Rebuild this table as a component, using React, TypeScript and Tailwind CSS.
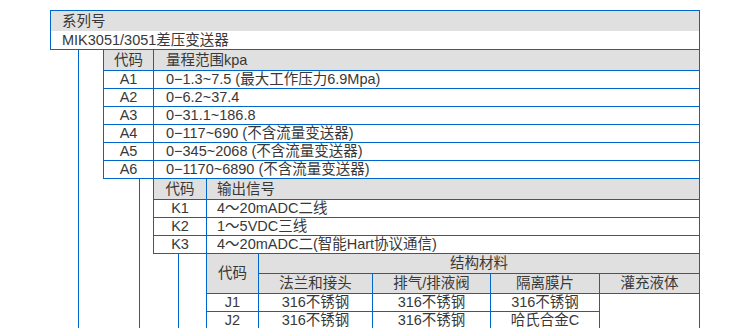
const BLUE = 'border-[#0066cc]'

function Row({ code, text }: { code: string; text: string }) {
  return (
    <div className={`flex h-[18px] border-b ${BLUE}`}>
      <div className={`w-[50px] text-center leading-[17px] border-r ${BLUE}`}>{code}</div>
      <div className="flex-1 pl-[12px] leading-[17px]">{text}</div>
    </div>
  )
}

export default function App() {
  const ranges = [
    ['A1', '0−1.3~7.5 (最大工作压力6.9Mpa)'],
    ['A2', '0−6.2~37.4'],
    ['A3', '0−31.1~186.8'],
    ['A4', '0−117~690 (不含流量变送器)'],
    ['A5', '0−345~2068 (不含流量变送器)'],
    ['A6', '0−1170~6890 (不含流量变送器)'],
  ]
  const outputs = [
    ['K1', '4～20mADC二线'],
    ['K2', '1～5VDC三线'],
    ['K3', '4～20mADC二(智能Hart协议通信)'],
  ]
  const cell = 'bg-white text-center leading-[17px]'
  const head = 'bg-[#e0e0e0] text-center leading-[19px]'

  return (
    <div
      className="w-[750px] h-[328px] overflow-hidden bg-white text-[14.5px] text-[#383838]"
      style={{ fontFamily: '"Liberation Sans", "Noto Sans CJK SC", sans-serif' }}
    >
      <div className="ml-[50px] mt-[10px] w-[650px]">
        {/* 系列号 */}
        <div className={`border ${BLUE}`}>
          <div className="h-[20px] bg-[#e0e0e0] pl-[11px] leading-[20px]">系列号</div>
          <div className="h-[18px] pl-[11px] leading-[18px]">MIK3051/3051差压变送器</div>
        </div>

        <div className="flex">
          <div className="w-[28px] shrink-0" />
          <div className={`w-[25px] shrink-0 border-l ${BLUE}`} />
          <div className="flex-1">
            {/* 量程 */}
            <div className={`border-x ${BLUE}`}>
              <div className={`flex h-[21px] bg-[#e0e0e0] border-b ${BLUE}`}>
                <div className={`w-[50px] text-center leading-[20px] border-r ${BLUE}`}>代码</div>
                <div className="flex-1 pl-[12px] leading-[20px]">量程范围kpa</div>
              </div>
              {ranges.map(([c, t]) => <Row key={c} code={c} text={t} />)}
            </div>

            <div className="flex">
              <div className="w-[36px] shrink-0" />
              <div className={`w-[14px] shrink-0 border-l ${BLUE}`} />
              <div className="flex-1">
                {/* 输出信号 */}
                <div className={`border-x ${BLUE}`}>
                  <div className={`flex h-[21px] bg-[#e0e0e0] border-b ${BLUE}`}>
                    <div className={`w-[53px] text-center leading-[20px] border-r ${BLUE}`}>代码</div>
                    <div className="flex-1 pl-[10px] leading-[20px]">输出信号</div>
                  </div>
                  {outputs.map(([c, t]) => (
                    <div key={c} className={`flex h-[18px] border-b ${BLUE}`}>
                      <div className={`w-[53px] text-center leading-[17px] border-r ${BLUE}`}>{c}</div>
                      <div className="flex-1 pl-[10px] leading-[17px]">{t}</div>
                    </div>
                  ))}
                </div>

                <div className="flex">
                  <div className="w-[25px] shrink-0" />
                  <div className={`w-[28px] shrink-0 border-l ${BLUE}`} />
                  {/* 结构材料 */}
                  <div className="grid grid-cols-[51px_113px_117px_108px_99px] grid-rows-[19px_19px_17px_17px] gap-px bg-[#0066cc] px-px pb-px">
                    <div className={`${head} row-span-2 flex items-center justify-center`}>代码</div>
                    <div className={`${head} col-span-4`}>结构材料</div>
                    <div className={head}>法兰和接头</div>
                    <div className={head}>排气/排液阀</div>
                    <div className={head}>隔离膜片</div>
                    <div className={head}>灌充液体</div>
                    <div className={cell}>J1</div>
                    <div className={cell}>316不锈钢</div>
                    <div className={cell}>316不锈钢</div>
                    <div className={cell}>316不锈钢</div>
                    <div className={`${cell} row-span-2`} />
                    <div className={cell}>J2</div>
                    <div className={cell}>316不锈钢</div>
                    <div className={cell}>316不锈钢</div>
                    <div className={cell}>哈氏合金C</div>
                  </div>
                </div>
              </div>
            </div>
          </div>
        </div>
      </div>
    </div>
  )
}
